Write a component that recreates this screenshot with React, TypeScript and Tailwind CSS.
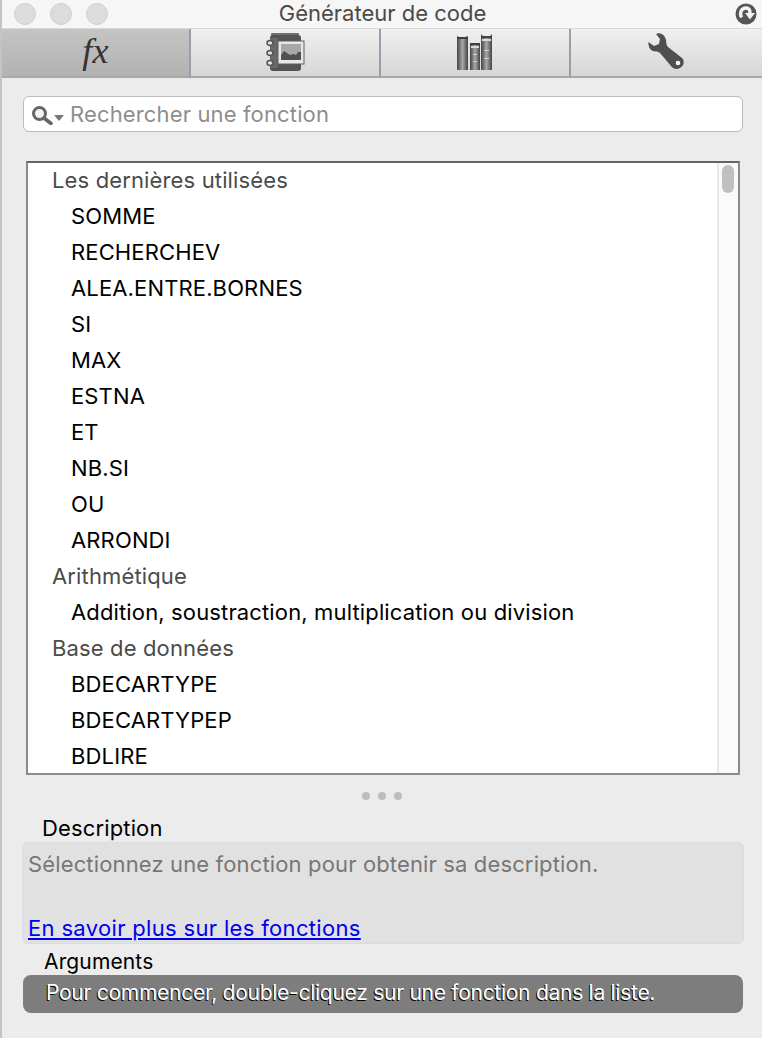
const sans = "font-['Inter','Liberation_Sans',sans-serif]";

function Notebook() {
  return (
    <svg width="60" height="47" viewBox="0 1 60 47">
      <rect x="16" y="5" width="28" height="3" rx="1" fill="#6e6e6e" />
      <rect x="15" y="7" width="31" height="36" rx="3" fill="#545454" />
      <rect x="15" y="10" width="8" height="30" fill="#686868" />
      {[15, 25, 35].map((y) => (
        <ellipse key={y} cx="15" cy={y} rx="3" ry="2.4" fill="#dedede" stroke="#555" strokeWidth="1.5" />
      ))}
      <rect x="23" y="13" width="26" height="23" fill="#e8e8e8" stroke="#5e5e5e" strokeWidth="1" />
      <rect x="26" y="16" width="20" height="16" fill="#a8a8a8" />
      <path d="M26 32 V27 L29 23 L32 25 L35 27 L38 26 L41 27 L43 24 L46 24 V32 Z" fill="#505050" />
    </svg>
  );
}

function Books() {
  return (
    <svg width="60" height="47" viewBox="0 1 60 47">
      <defs>
        <linearGradient id="spine" x1="0" x2="1" y1="0" y2="0">
          <stop offset="0" stopColor="#444" />
          <stop offset="0.5" stopColor="#a8a8a8" />
          <stop offset="1" stopColor="#444" />
        </linearGradient>
      </defs>
      <path d="M12 8 L14 9 H20 L23 8 V42 H12 Z" fill="url(#spine)" />
      <path d="M25 15 H35 V42 H25 Z" fill="url(#spine)" />
      <path d="M36 6 L38 8 H45 L47 6 V42 H36 Z" fill="url(#spine)" />
      <rect x="12" y="9" width="11" height="2" fill="#3f3f3f" />
      <rect x="25" y="15" width="10" height="2" fill="#3f3f3f" />
      <rect x="36" y="8" width="11" height="2" fill="#444" />
      <rect x="37" y="11" width="9" height="2" fill="#d8d8d8" />
      <rect x="26" y="18" width="8" height="2" fill="#d8d8d8" />
      <rect x="39" y="22" width="5" height="1" fill="#d0d0d0" />
      <rect x="39" y="30" width="5" height="1" fill="#d0d0d0" />
      <rect x="28" y="26" width="4" height="1" fill="#d0d0d0" />
      <rect x="28" y="33" width="4" height="1" fill="#d0d0d0" />
    </svg>
  );
}

function Wrench() {
  return (
    <svg width="60" height="47" viewBox="0 1 60 47">
      <path
        d="M19 6 C23 4 28 7 29 12 C29.5 15 29 17 31 19 L45 30 C48 33 47 38 43 40 C40 42 36 41 34 38 L23 25 C21 23 19 24 16 23 C13 22 11 18 11.5 14 L17 18 L22 16 L23 11 Z"
        fill="#4f4f4f"
      />
      <circle cx="41" cy="35" r="2.3" fill="#f4f4f4" />
    </svg>
  );
}

function Search() {
  return (
    <svg width="36" height="22" viewBox="0 0 36 22">
      <circle cx="7.5" cy="10.5" r="6" fill="#f2f2f2" stroke="#666" strokeWidth="3" />
      <path d="M12 15 L19 20.5" stroke="#666" strokeWidth="3.5" strokeLinecap="round" />
      <path d="M22 12 H32 L27 18 Z" fill="#777" />
    </svg>
  );
}

function Globe() {
  return (
    <svg width="22" height="22" viewBox="0 0 22 22">
      <circle cx="11" cy="11" r="10.5" fill="#555" />
      <path d="M6.5 14.5 C4 9 7 5 11 5 C13.5 5 15 6.5 15 10" fill="none" stroke="#f2f2f2" strokeWidth="3.4" />
      <path d="M10 10 H20 L15 16.5 Z" fill="#f2f2f2" />
    </svg>
  );
}

function Tab({ active, last, children }: { active?: boolean; last?: boolean; children: React.ReactNode }) {
  return (
    <div
      className={`h-[49px] flex items-center justify-center border-b-2 border-b-[#a9a9a9] ${
        last ? "" : "border-r-2 border-r-[#9a9eaa]"
      } ${
        active
          ? "bg-gradient-to-b from-[#c4c4c4] to-[#b2b2b2]"
          : "bg-gradient-to-b from-[#f0f0f0] to-[#d6d6d6]"
      }`}
    >
      {children}
    </div>
  );
}

function Head({ children }: { children: string }) {
  return <div className="h-9 flex items-center pl-[24px] pb-[2px] text-[#4b4b4b]">{children}</div>;
}

function Item({ children }: { children: string }) {
  return <div className="h-9 flex items-center pl-[43px] pb-[2px] text-black">{children}</div>;
}

const recent = ["SOMME", "RECHERCHEV", "ALEA.ENTRE.BORNES", "SI", "MAX", "ESTNA", "ET", "NB.SI", "OU", "ARRONDI"];

export default function App() {
  return (
    <div className={`${sans} w-[762px] h-[1038px] overflow-hidden bg-[#ececec] border-l-2 border-l-[#c4c4c4] flex flex-col text-[22px] leading-none tracking-[0.14px]`}>
      <div className="h-[29px] shrink-0 bg-[#f6f6f6] border-b border-b-[#d8d8d8] grid grid-cols-[1fr_auto_1fr] items-center pl-[12px] pr-[5px]">
        <div className="flex gap-[14px]">
          <div className="w-[22px] h-[22px] rounded-full bg-[#dcdcdc] border border-[#d0d0d0]" />
          <div className="w-[22px] h-[22px] rounded-full bg-[#dcdcdc] border border-[#d0d0d0]" />
          <div className="w-[22px] h-[22px] rounded-full bg-[#dcdcdc] border border-[#d0d0d0]" />
        </div>
        <div className="text-[#4a4a4a] tracking-[0px] mr-[6px] pb-[3px]">Générateur de code</div>
        <div className="justify-self-end"><Globe /></div>
      </div>

      <div className="grid grid-cols-[189px_190px_190px_1fr] shrink-0">
        <Tab active>
          <span className="font-['Liberation_Serif',serif] italic text-[36px] text-[#333] mb-[4px]">fx</span>
        </Tab>
        <Tab><Notebook /></Tab>
        <Tab><Books /></Tab>
        <Tab last><Wrench /></Tab>
      </div>

      <div className="mt-[18px] ml-[21px] w-[720px] h-[36px] shrink-0 bg-white border border-[#bcbcbc] rounded-[6px] flex items-center pl-[8px] gap-[2px] text-[#8e8e8e]">
        <Search />
        <span>Rechercher une fonction</span>
      </div>

      <div className="mt-[29px] ml-[24px] w-[714px] h-[614px] shrink-0 bg-white border-2 border-[#8a8a8a] border-t-[#666666] flex overflow-hidden">
        <div className="flex-1 overflow-hidden">
          <Head>Les dernières utilisées</Head>
          {recent.map((r) => (
            <Item key={r}>{r}</Item>
          ))}
          <Head>Arithmétique</Head>
          <Item>Addition, soustraction, multiplication ou division</Item>
          <Head>Base de données</Head>
          <Item>BDECARTYPE</Item>
          <Item>BDECARTYPEP</Item>
          <Item>BDLIRE</Item>
        </div>
        <div className="w-[21px] shrink-0 bg-[#fafafa] border-l-2 border-l-[#e8e8e8] pl-[3px] pt-[2px]">
          <div className="w-[12px] h-[28px] rounded-full bg-[#c0c0c0]" />
        </div>
      </div>

      <div className="h-[42px] shrink-0 flex items-center justify-center gap-[8px]">
        <div className="w-[8px] h-[8px] rounded-full bg-[#bdbdbd]" />
        <div className="w-[8px] h-[8px] rounded-full bg-[#bdbdbd]" />
        <div className="w-[8px] h-[8px] rounded-full bg-[#bdbdbd]" />
      </div>

      <div className="ml-[40px] h-[22px] shrink-0 flex items-center text-black">Description</div>
      <div className="ml-[20px] mt-[3px] w-[722px] h-[102px] shrink-0 bg-[#e1e1e1] border border-[#dcdcdc] rounded-[6px] px-[5px] flex flex-col justify-between pt-[10px] pb-[4px]">
        <div className="text-[#777777]">Sélectionnez une fonction pour obtenir sa description.</div>
        <a className="text-[#0000ee] underline tracking-[0.33px]">En savoir plus sur les fonctions</a>
      </div>

      <div className="ml-[42px] mt-[5px] h-[24px] shrink-0 flex items-center text-black text-[21px]">Arguments</div>
      <div className="ml-[21px] mt-[2px] w-[720px] h-[38px] shrink-0 bg-[#7d7d7d] rounded-[8px] flex items-center pl-[23px] pb-[4px] text-white text-[21px] tracking-[-0.27px] [text-shadow:-1px_1px_0_#000]">
        Pour commencer, double-cliquez sur une fonction dans la liste.
      </div>
    </div>
  );
}
